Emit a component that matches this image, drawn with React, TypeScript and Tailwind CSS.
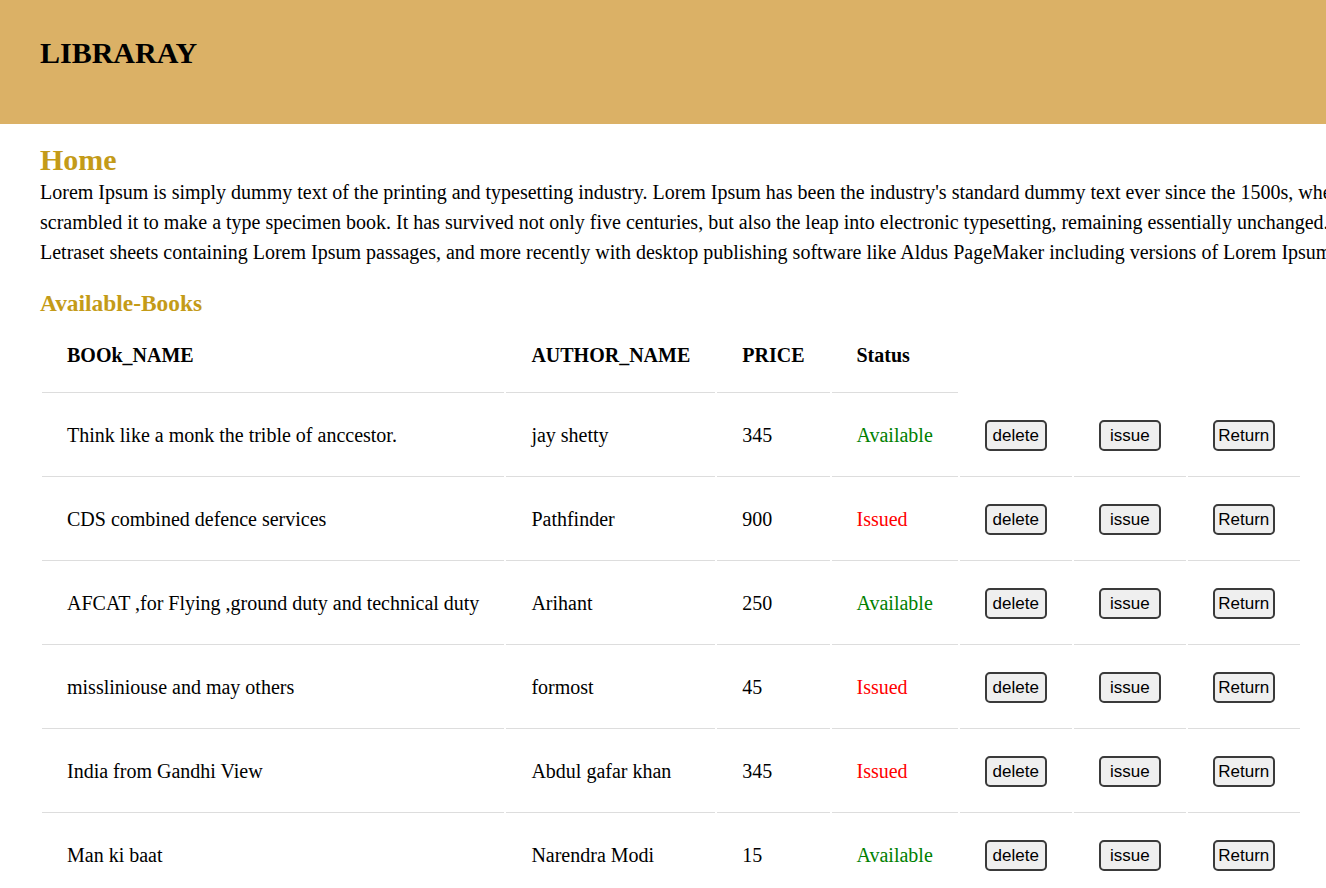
import React from 'react'

interface Book {
  name: string
  author: string
  price: number
  issued: boolean
}

const books: Book[] = [
  { name: 'Think like a monk the trible of anccestor.', author: 'jay shetty', price: 345, issued: false },
  { name: 'CDS combined defence services', author: 'Pathfinder', price: 900, issued: true },
  { name: 'AFCAT ,for Flying ,ground duty and technical duty', author: 'Arihant', price: 250, issued: false },
  { name: 'missliniouse and may others', author: 'formost', price: 45, issued: true },
  { name: 'India from Gandhi View', author: 'Abdul gafar khan', price: 345, issued: true },
  { name: 'Man ki baat', author: 'Narendra Modi', price: 15, issued: false },
]

const cell = 'px-[25px] py-[25px] border-b border-[#dddddd] text-left align-middle whitespace-nowrap'

function ActionButton({ label }: { label: string }) {
  return (
    <button
      type="button"
      className="w-[62px] h-[31px] rounded-[5px] border-2 border-[#3a3a3a] bg-[#efefef] text-[17px] text-black leading-[normal] font-['Liberation_Sans',Arial,sans-serif]"
    >
      {label}
    </button>
  )
}

export default function App() {
  return (
    <div className="min-h-screen w-full overflow-hidden bg-white text-black font-['Liberation_Serif','Times_New_Roman',serif]">
      {/* Top banner */}
      <header className="h-[124px] bg-[#dbb166] px-[40px] pt-[36px]">
        <h2 className="text-[30px] font-bold leading-[normal]">LIBRARAY</h2>
      </header>

      <main className="px-[40px] pt-[19px]">
        <h2 className="text-[30px] font-bold leading-[normal] text-[#c49b18]">Home</h2>
        <p className="text-[20px] leading-[30px] whitespace-nowrap">
          Lorem Ipsum is simply dummy text of the printing and typesetting industry. Lorem Ipsum has been the industry's standard dummy text ever since the 1500s, when an unknown printer took a galley of type and
          <br />
          scrambled it to make a type specimen book. It has survived not only five centuries, but also the leap into electronic typesetting, remaining essentially unchanged. It was popularised in the 1960s with the release of
          <br />
          Letraset sheets containing Lorem Ipsum passages, and more recently with desktop publishing software like Aldus PageMaker including versions of Lorem Ipsum.
        </p>

        <h3 className="mt-[23px] text-[23.4px] font-bold leading-[normal] text-[#c49b18]">Available-Books</h3>

        <table className="border-separate border-spacing-[2px] text-[20px] leading-[normal]">
          <thead>
            <tr>
              <th className={cell + ' font-bold'}>BOOk_NAME</th>
              <th className={cell + ' font-bold'}>AUTHOR_NAME</th>
              <th className={cell + ' font-bold'}>PRICE</th>
              <th className={cell + ' font-bold'}>Status</th>
            </tr>
          </thead>
          <tbody>
            {books.map((b) => (
              <tr key={b.name}>
                <td className={cell}>{b.name}</td>
                <td className={cell}>{b.author}</td>
                <td className={cell}>{b.price}</td>
                <td className={cell + (b.issued ? ' text-[#ff0000]' : ' text-[#008000]')}>
                  {b.issued ? 'Issued' : 'Available'}
                </td>
                <td className={cell}>
                  <ActionButton label="delete" />
                </td>
                <td className={cell}>
                  <ActionButton label="issue" />
                </td>
                <td className={cell}>
                  <ActionButton label="Return" />
                </td>
              </tr>
            ))}
          </tbody>
        </table>
      </main>
    </div>
  )
}
